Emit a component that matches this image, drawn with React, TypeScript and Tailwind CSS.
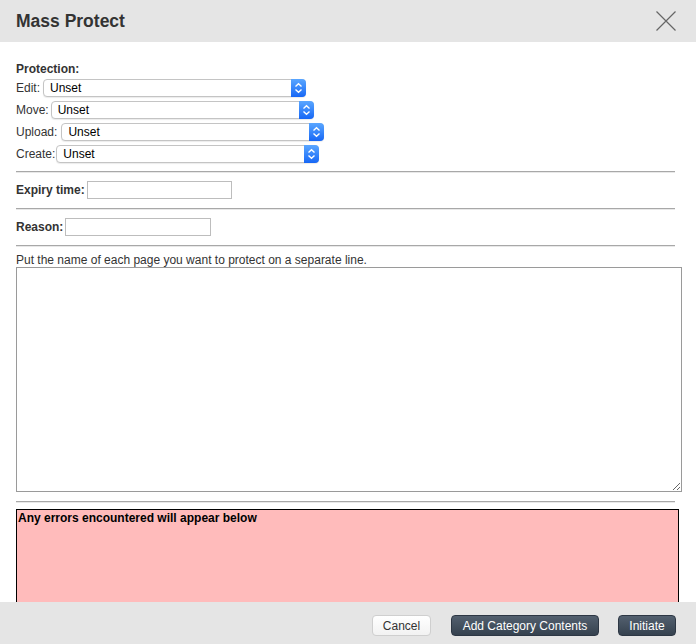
import React from 'react';

// ─── pieces ───────────────────────────────────────────────────────────────────

function Stepper() {
    return (
        <div className="w-[15px] self-stretch -my-px -mr-px rounded-r-[4px] bg-gradient-to-b from-[#5aa6ff] to-[#1666f5] flex items-center justify-center">
            <svg width="9" height="12" viewBox="0 0 9 12" fill="none" stroke="white" strokeWidth={1.4}>
                <path d="M1.5 4.5L4.5 1.8l3 2.7" />
                <path d="M1.5 7.5l3 2.7 3-2.7" />
            </svg>
        </div>
    );
}

function FakeSelect({ value }: { value: string }) {
    return (
        <div className="w-[263px] h-[18px] flex items-center bg-white border border-[#c4c4c4] rounded-[4px] shadow-[0_1px_1px_rgba(0,0,0,0.08)]">
            <span className="flex-1 pl-[6px] text-[12px] leading-none text-black">{value}</span>
            <Stepper />
        </div>
    );
}

function ProtectRow({ label, gap }: { label: string; gap: string }) {
    return (
        <div className={`flex items-center h-[18px] ${gap}`}>
            <span className="text-[12px] text-[#333]">{label}</span>
            <FakeSelect value="Unset" />
        </div>
    );
}

function Rule() {
    return <div className="w-[659px] border-t border-[#a8a8a8] shadow-[0_1px_0_#e8e8e8]" />;
}

function TextRow({ label, width }: { label: string; width: string }) {
    return (
        <div className="flex items-center gap-[2px] h-[18px]">
            <span className="text-[12px] font-bold text-[#333]">{label}</span>
            <div className={`${width} h-[18px] bg-white border border-[#bdbdbd]`} />
        </div>
    );
}

// ─── dialog ───────────────────────────────────────────────────────────────────

export default function App() {
    return (
        <div className="w-[696px] h-[644px] flex flex-col bg-white overflow-hidden font-['Liberation_Sans',Arial,sans-serif]">
            {/* Title bar */}
            <div className="h-[42px] shrink-0 bg-[#e5e5e5] flex items-center justify-between pl-[16px] pr-[19px]">
                <h1 className="text-[17.5px] font-bold text-[#333] whitespace-nowrap">Mass Protect</h1>
                <svg width="22" height="22" viewBox="0 0 22 22" stroke="#666" strokeWidth={1.2} fill="none">
                    <path d="M1.5 1.5l19 19M20.5 1.5l-19 19" />
                </svg>
            </div>

            {/* Body */}
            <div className="flex-1 min-h-0 overflow-hidden px-[16px] pt-[20px]">
                <div className="text-[12px] font-bold text-[#333] leading-[14px]">Protection:</div>
                <div className="flex flex-col gap-[4px] mt-[3px]">
                    <ProtectRow label="Edit:" gap="gap-[3px]" />
                    <ProtectRow label="Move:" gap="gap-[2px]" />
                    <ProtectRow label="Upload:" gap="gap-[4px]" />
                    <ProtectRow label="Create:" gap="gap-[1px]" />
                </div>

                <div className="mt-[8px]"><Rule /></div>
                <div className="mt-[9px]"><TextRow label="Expiry time:" width="w-[145px]" /></div>
                <div className="mt-[9px]"><Rule /></div>
                <div className="mt-[9px]"><TextRow label="Reason:" width="w-[146px]" /></div>
                <div className="mt-[9px]"><Rule /></div>

                <p className="mt-[7px] text-[12px] leading-[14px] text-[#333]">
                    Put the name of each page you want to protect on a separate line.
                </p>
                <textarea className="block w-[666px] h-[225px] border border-[#9a9a9a] bg-white resize-y outline-none" />

                <div className="mt-[9px]"><Rule /></div>

                <div className="mt-[7px] w-[663px] h-[160px] bg-[#ffbbbb] border border-black px-[1px]">
                    <div className="text-[12px] font-bold text-black leading-[14px] pt-[1px]">
                        Any errors encountered will appear below
                    </div>
                </div>
            </div>

            {/* Button pane */}
            <div className="h-[42px] shrink-0 bg-[#e5e5e5] flex items-start justify-end pr-[20px] gap-[19px] pt-[13px]">
                <button className="h-[21px] w-[59px] rounded-[4px] border border-[#cfcfcf] bg-gradient-to-b from-white to-[#f2f2f2] text-[12px] text-[#333] mr-[1px]">
                    Cancel
                </button>
                <button className="h-[21px] w-[148px] rounded-[4px] border border-[#2d3744] bg-gradient-to-b from-[#53606f] to-[#36424f] text-[12px] text-white">
                    Add Category Contents
                </button>
                <button className="h-[21px] w-[58px] rounded-[4px] border border-[#2d3744] bg-gradient-to-b from-[#53606f] to-[#36424f] text-[12px] text-white">
                    Initiate
                </button>
            </div>
        </div>
    );
}
